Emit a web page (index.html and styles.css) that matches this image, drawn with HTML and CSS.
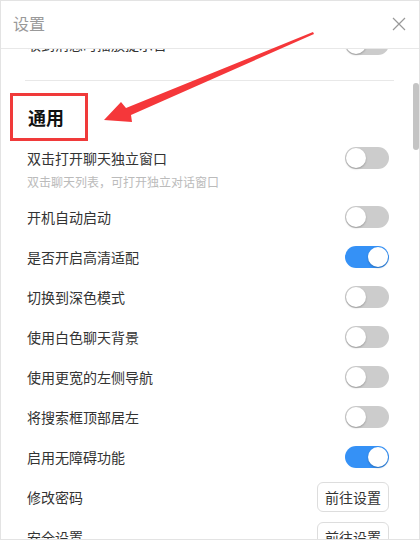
FILE: index.html
```html
<!DOCTYPE html>
<html lang="zh-CN">
<head>
<meta charset="UTF-8">
<title>设置</title>
<link rel="stylesheet" href="styles.css">
</head>
<body>
<div class="dialog">
    <div class="header">
        <span class="title">设置</span>
        <svg class="close" width="14" height="14" viewBox="0 0 14 14">
            <path d="M1 1L13 13M13 1L1 13" stroke="#999" stroke-width="1.2" fill="none"/>
        </svg>
    </div>
    <div class="content">
        <div class="inner">
            <div class="row">
                <span>收到消息时播放提示音</span>
                <span class="switch"></span>
            </div>
            <div class="divider"></div>

            <div class="section-title">通用</div>

            <div class="row">
                <span>双击打开聊天独立窗口</span>
                <span class="switch"></span>
            </div>
            <div class="sub">双击聊天列表，可打开独立对话窗口</div>

            <div class="row">
                <span>开机自动启动</span>
                <span class="switch"></span>
            </div>
            <div class="row">
                <span>是否开启高清适配</span>
                <span class="switch on"></span>
            </div>
            <div class="row">
                <span>切换到深色模式</span>
                <span class="switch"></span>
            </div>
            <div class="row">
                <span>使用白色聊天背景</span>
                <span class="switch"></span>
            </div>
            <div class="row">
                <span>使用更宽的左侧导航</span>
                <span class="switch"></span>
            </div>
            <div class="row">
                <span>将搜索框顶部居左</span>
                <span class="switch"></span>
            </div>
            <div class="row">
                <span>启用无障碍功能</span>
                <span class="switch on"></span>
            </div>
            <div class="row">
                <span>修改密码</span>
                <button class="go">前往设置</button>
            </div>
            <div class="row">
                <span>安全设置</span>
                <button class="go">前往设置</button>
            </div>
        </div>
        <div class="scroll-thumb"></div>
    </div>

    <!-- annotation -->
    <div class="mark"></div>
    <svg class="arrow" width="420" height="540" viewBox="0 0 420 540">
        <polygon points="104,120 121,102 126,108 313,32 314,34 131,115 132,122" fill="#f5373a"/>
    </svg>
</div>
</body>
</html>
```

FILE: styles.css
```css
body {
    margin: 0;
    font-family: "Noto Sans CJK SC", "Noto Sans", sans-serif;
    background: #fff;
}
.dialog {
    position: relative;
    width: 420px;
    height: 540px;
    box-sizing: border-box;
    border: 1px solid #e3e3e3;
    overflow: hidden;
    background: #fff;
}
.header {
    height: 47px;
    border-bottom: 1px solid #e8e8e8;
    padding: 0 12px;
    display: flex;
    align-items: center;
    justify-content: space-between;
}
.title {
    margin-top: -4px;
    font-size: 16px;
    color: #999;
}
.close {
    margin: -2px 1px 0 0;
}
.content {
    position: relative;
    height: 491px;
    overflow: hidden;
}
.inner {
    margin-top: -25px;
    padding: 0 30px 0 26px;
}
.row {
    height: 40px;
    display: flex;
    align-items: center;
    justify-content: space-between;
    font-size: 14px;
    color: #333;
}
.divider {
    margin: 16px -5px 0 -2px;
    border-top: 1px solid #e8e8e8;
}
.section-title {
    margin: 24px 0 9px 1px;
    line-height: 24px;
    font-size: 18px;
    font-weight: bold;
    color: #111;
}
.sub {
    margin: -5px 0 6px;
    line-height: 18px;
    font-size: 12px;
    color: #bbb;
}
.switch {
    position: relative;
    width: 44px;
    height: 22px;
    border-radius: 11px;
    background: #cccccc;
}
.switch::after {
    content: "";
    position: absolute;
    top: 1px;
    left: 1px;
    width: 20px;
    height: 20px;
    border-radius: 50%;
    background: #fff;
    box-shadow: 0 1px 2px rgba(0, 0, 0, 0.25);
}
.switch.on {
    background: #3591f6;
}
.switch.on::after {
    left: 23px;
}
.go {
    height: 30px;
    padding: 0 7px;
    border: 1px solid #ddd;
    border-radius: 6px;
    background: #fff;
    font-family: inherit;
    font-size: 14px;
    color: #333;
}
.scroll-thumb {
    position: absolute;
    right: 0;
    top: 34px;
    width: 6px;
    height: 67px;
    border-radius: 3px;
    background: #c4c4c4;
}
.mark {
    position: absolute;
    left: 9px;
    top: 92px;
    width: 72px;
    height: 42px;
    border: 3px solid #f03a3a;
}
.arrow {
    position: absolute;
    left: -1px;
    top: -1px;
}
```
